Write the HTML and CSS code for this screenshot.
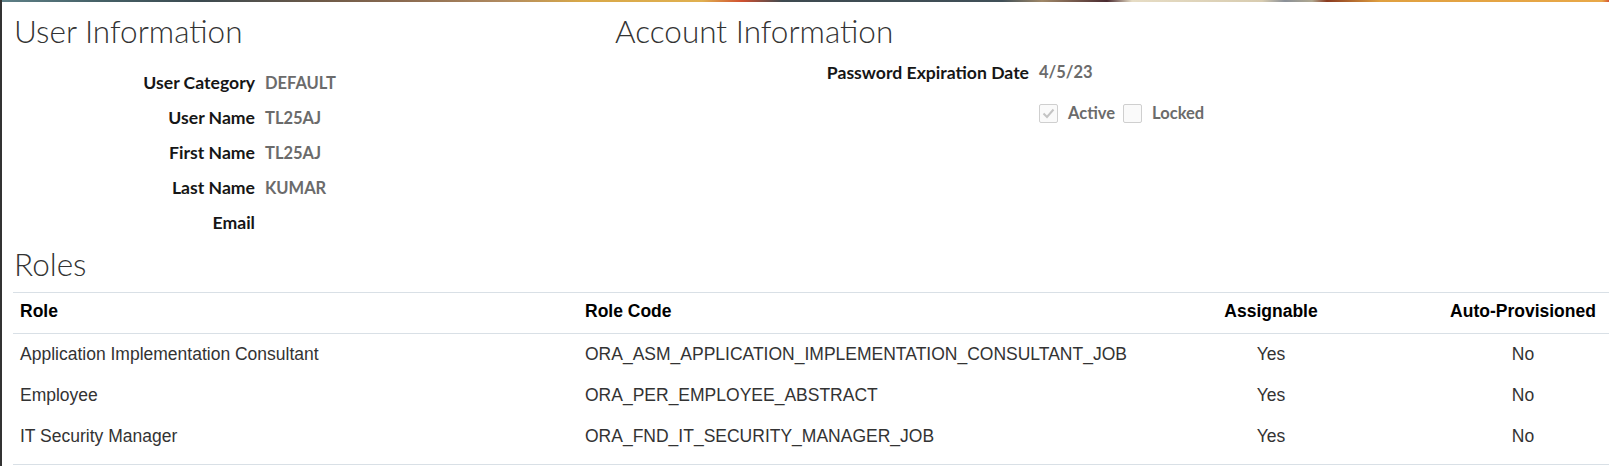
FILE: index.html
```html
<!DOCTYPE html>
<html>
<head>
<meta charset="utf-8">
<link rel="stylesheet" href="styles.css">
</head>
<body>
<div class="page">
  <div class="banner"></div>
  <div class="top">
    <section class="user-info">
      <h1 class="heading">User Information</h1>
      <div class="form user-form">
        <div class="label">User Category</div><div class="value">DEFAULT</div>
        <div class="label">User Name</div><div class="value">TL25AJ</div>
        <div class="label">First Name</div><div class="value">TL25AJ</div>
        <div class="label">Last Name</div><div class="value">KUMAR</div>
        <div class="label">Email</div><div class="value"></div>
      </div>
    </section>
    <section class="account-info">
      <h1 class="heading">Account Information</h1>
      <div class="form account-form">
        <div class="label">Password Expiration Date</div><div class="value">4/5/23</div>
        <div class="label"></div>
        <div class="value checks">
          <span class="cb checked"><svg viewBox="0 0 19 19" width="19" height="19"><path d="M4.5 9.5 L8 13 L14.5 5.5" fill="none" stroke="#c4c4c4" stroke-width="2"/></svg></span>
          <span class="cb-label">Active</span>
          <span class="cb"></span>
          <span class="cb-label">Locked</span>
        </div>
      </div>
    </section>
  </div>
  <h1 class="heading roles-heading">Roles</h1>
  <div class="table-wrap">
    <table class="roles">
      <colgroup>
        <col class="c1"><col class="c2"><col class="c3"><col class="c4">
      </colgroup>
      <thead>
        <tr><th class="left">Role</th><th class="left">Role Code</th><th class="mid">Assignable</th><th class="last">Auto-Provisioned</th></tr>
      </thead>
      <tbody>
        <tr><td>Application Implementation Consultant</td><td>ORA_ASM_APPLICATION_IMPLEMENTATION_CONSULTANT_JOB</td><td class="mid">Yes</td><td class="last">No</td></tr>
        <tr><td>Employee</td><td>ORA_PER_EMPLOYEE_ABSTRACT</td><td class="mid">Yes</td><td class="last">No</td></tr>
        <tr><td>IT Security Manager</td><td>ORA_FND_IT_SECURITY_MANAGER_JOB</td><td class="mid">Yes</td><td class="last">No</td></tr>
      </tbody>
    </table>
  </div>
</div>
</body>
</html>
```

FILE: styles.css
```css
html, body {
  margin: 0;
  padding: 0;
  background: #ffffff;
}
.page {
  border-left: 2px solid #333333;
  height: 466px;
  box-sizing: border-box;
  overflow: hidden;
}
.banner {
  height: 2px;
  background: linear-gradient(to right,
    #5d7f86 0px, #456066 100px, #3c4a50 200px, #6e5a48 320px, #8a6a50 400px,
    #b08a60 500px, #d8a848 580px, #e0b050 700px, #d05030 740px, #3e4a50 780px,
    #405058 1000px, #a08868 1040px, #4a2a30 1105px, #e6dcc4 1130px, #d8ccb0 1260px,
    #8a9098 1283px, #b0a890 1310px, #8a3a20 1325px, #e0a040 1378px, #e8a848 1600px, #d04030 1609px);
}
.top {
  display: flex;
}
.user-info {
  width: 600px;
  padding-left: 12px;
  box-sizing: border-box;
}
.account-info {
  flex: 1;
  padding-left: 13px;
}
.heading {
  font-family: Lato, "Open Sans", sans-serif;
  font-weight: 300;
  font-size: 31.5px;
  line-height: 40px;
  color: #333333;
  margin: 9px 0 0 0;
}
.form {
  display: grid;
  column-gap: 12px;
  align-items: center;
  font-family: Lato, "Noto Sans", sans-serif;
  font-weight: 700;
  font-size: 16.5px;
}
.form .label {
  font-size: 17.6px;
}
.user-form {
  grid-template-columns: 241px auto;
  column-gap: 10px;
  grid-auto-rows: 35px;
  margin-top: 14px;
}
.account-form {
  grid-template-columns: 414px auto;
  column-gap: 10px;
  margin-top: 2px;
}
.account-form > .label, .account-form > .value {
  height: 38px;
  display: flex;
  align-items: center;
}
.account-form > .label {
  justify-content: flex-end;
}
.account-form > .checks {
  margin-top: 3px;
}
.label {
  text-align: right;
  color: #161616;
}
.value {
  color: #6b6b6b;
}
.checks {
  display: flex;
  align-items: center;
}
.cb {
  width: 17px;
  height: 17px;
  border: 1px solid #cfcfcf;
  border-radius: 2px;
  background: #fafafa;
  display: inline-flex;
  align-items: center;
  justify-content: center;
  overflow: hidden;
}
.cb svg {
  flex: none;
}
.cb-label {
  color: #6b6b6b;
  margin-left: 10px;
  margin-right: 8px;
}
.roles-heading {
  margin: 4px 0 0 12px;
}
.table-wrap {
  margin: 8px 0 0 11px;
  border-top: 1px solid #d9e0e6;
  border-bottom: 1px solid #d9e0e6;
  padding-bottom: 7px;
}
.roles {
  width: 100%;
  border-collapse: collapse;
  table-layout: fixed;
  font-family: "Liberation Sans", Arial, sans-serif;
  font-size: 17.5px;
}
.c1 { width: 565px; }
.c2 { width: 568px; }
.c3 { width: 250px; }
.c4 { width: 213px; }
.roles th {
  font-weight: 700;
  color: #000000;
  height: 36px;
  padding: 0 7px 4px 7px;
  border-bottom: 1px solid #d9e0e6;
  white-space: nowrap;
}
.roles td {
  color: #333333;
  height: 41px;
  padding: 0 7px;
  white-space: nowrap;
}
.left { text-align: left; }
.roles .mid {
  text-align: center;
  padding-left: 5px;
  padding-right: 5px;
}
.roles .last {
  text-align: center;
  padding-left: 43px;
  padding-right: 2px;
}
```
